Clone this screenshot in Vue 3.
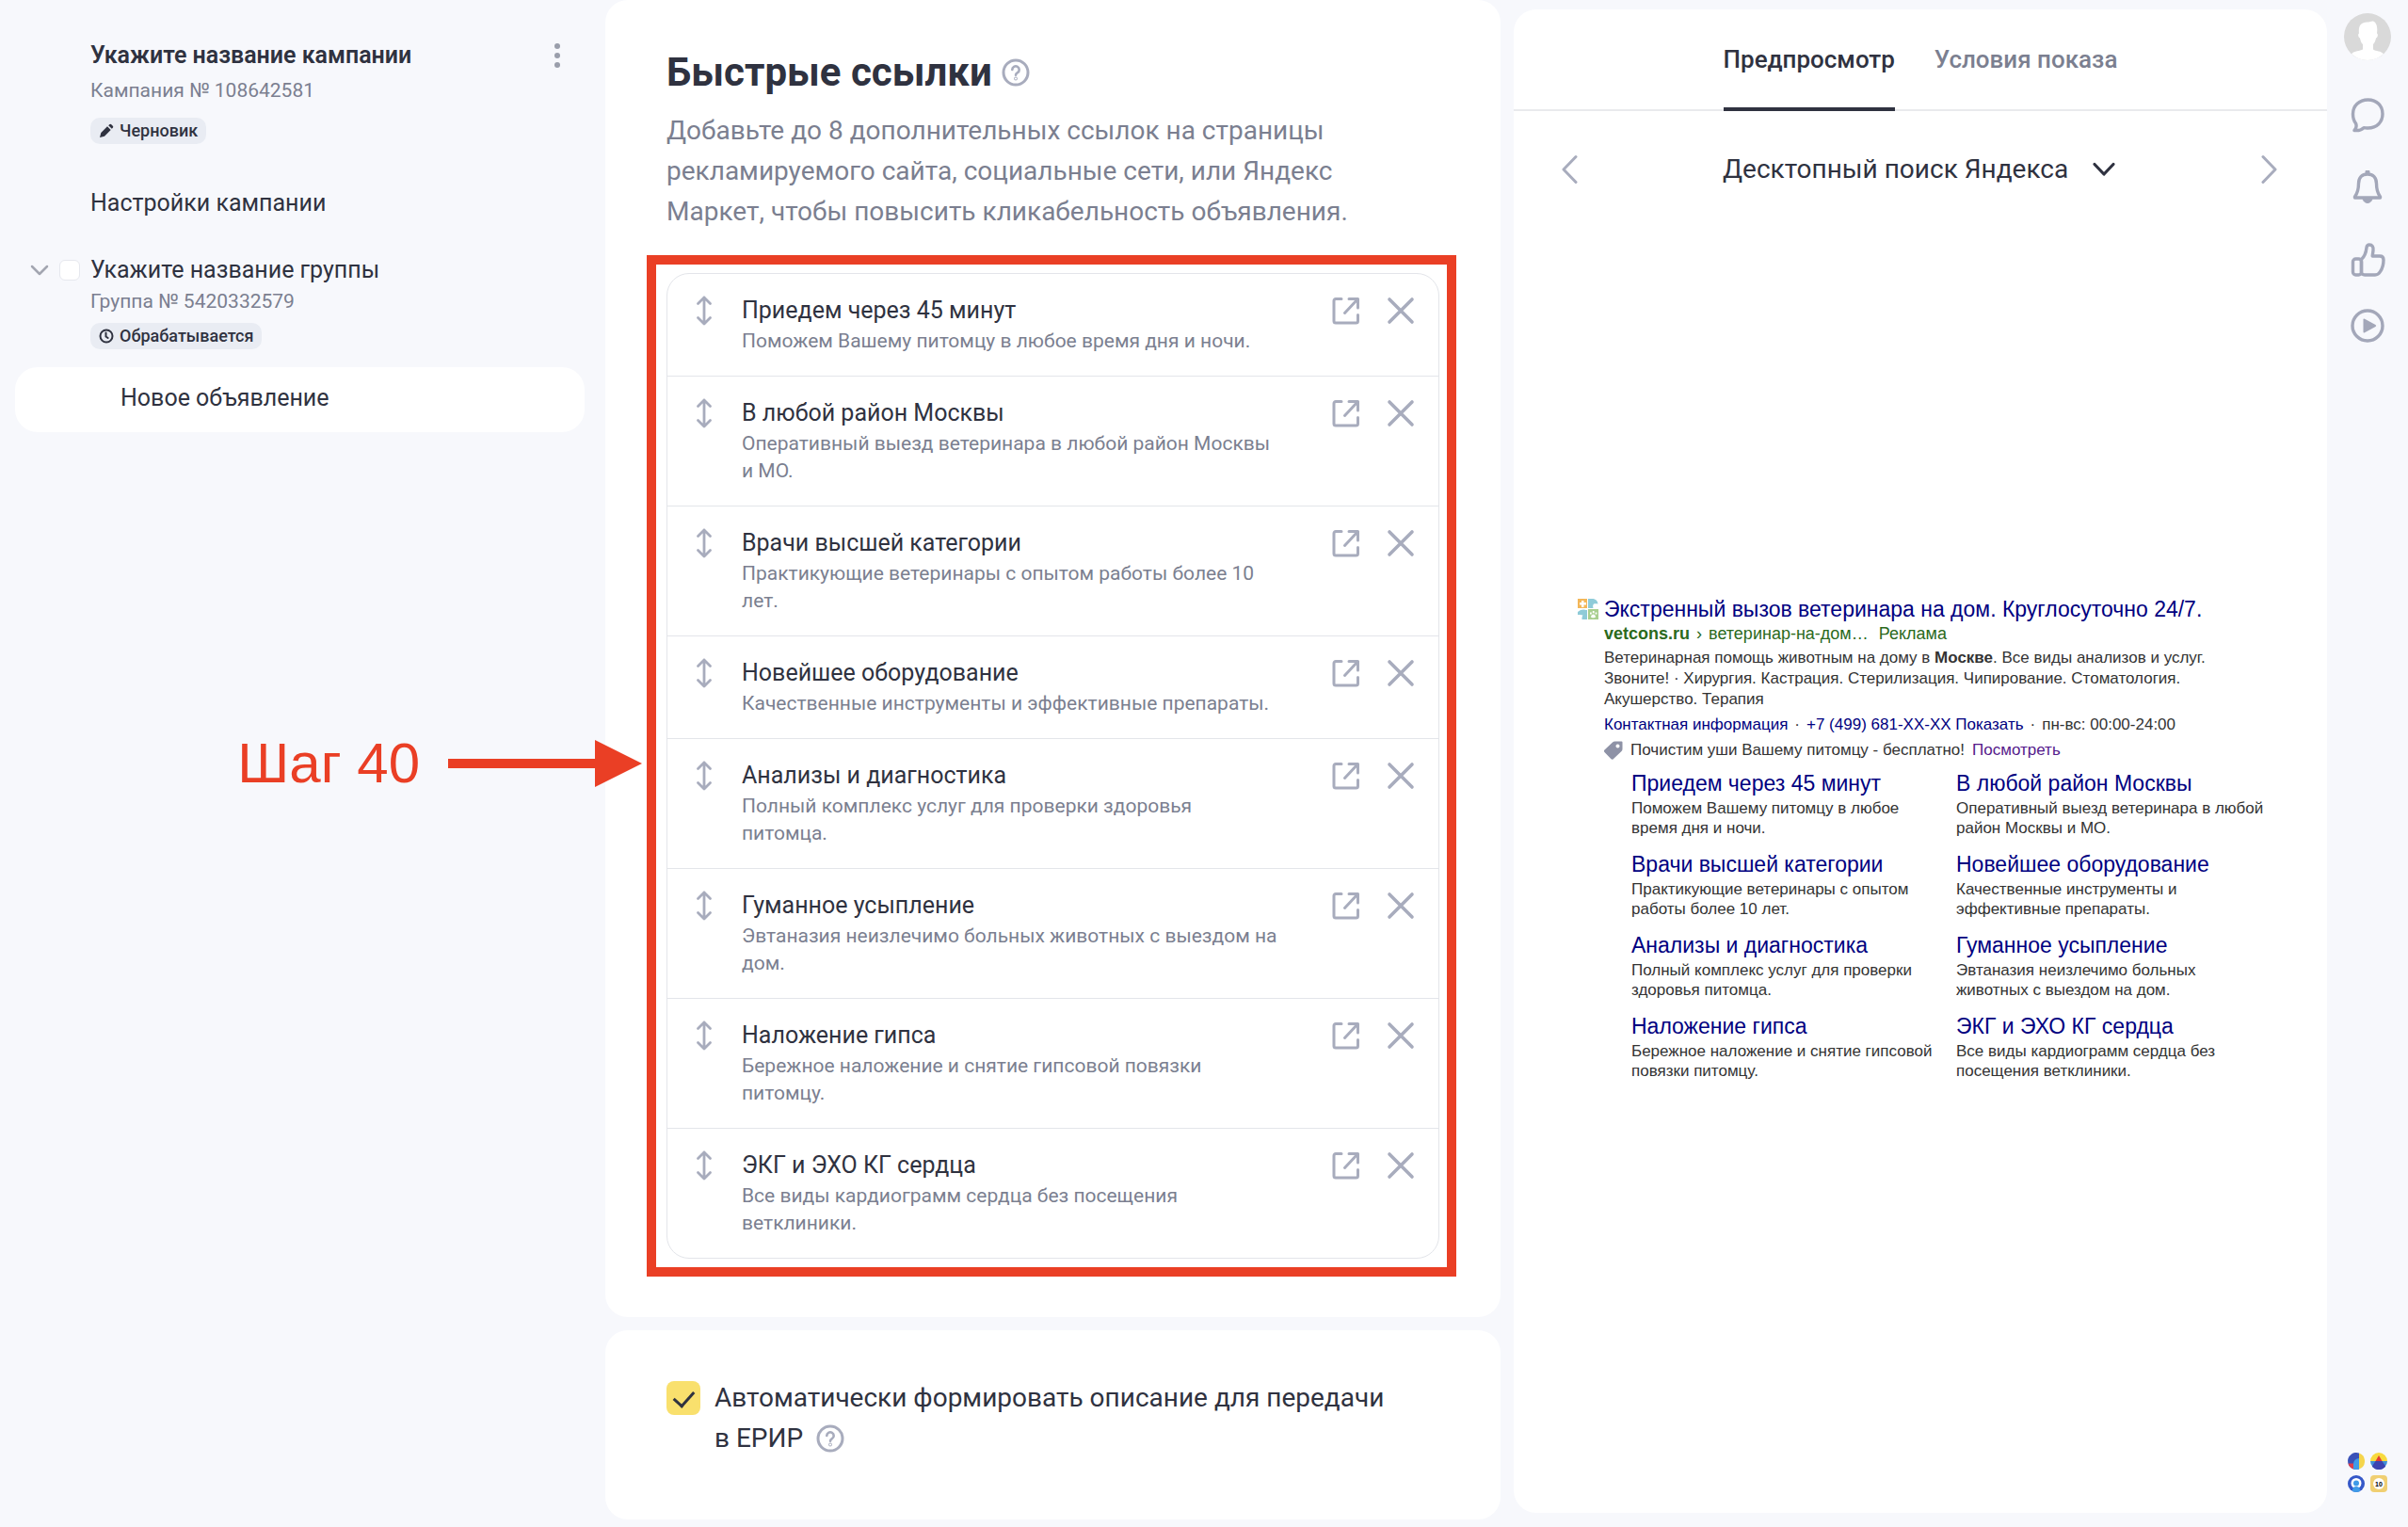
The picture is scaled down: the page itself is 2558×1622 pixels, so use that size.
<template>
  <div class="page">
    <aside class="sidebar">
      <header class="campaign">
        <div class="campaign-top">
          <h2 class="campaign-name">Укажите название кампании</h2>
          <button class="icon-button" aria-label="Меню кампании">
            <svg width="6" height="26" viewBox="0 0 6 26" fill="#9a9eab">
              <circle cx="3" cy="3" r="3" />
              <circle cx="3" cy="13" r="3" />
              <circle cx="3" cy="23" r="3" />
            </svg>
          </button>
        </div>
        <p class="muted">Кампания № 108642581</p>
        <span class="badge">
          <svg width="16" height="16" viewBox="0 0 16 16" fill="#2f3240">
            <path d="M1 15l1.300-5L9 3.300l3.700 3.700L6 13.700zM10.200 2.200l1-1a1.500 1.500 0 0 1 2.100 0l1.500 1.500a1.500 1.500 0 0 1 0 2.100l-1 1z" />
          </svg>
          Черновик
        </span>
      </header>

      <nav class="tree">
        <a href="#settings" class="tree-link">Настройки кампании</a>

        <div class="group">
          <button class="icon-button" aria-label="Свернуть группу">
            <svg width="20" height="12" viewBox="0 0 20 12" fill="none" stroke="#a3a6b1" stroke-width="2.500" stroke-linecap="round" stroke-linejoin="round">
              <path d="M2 2l8 8 8-8" />
            </svg>
          </button>
          <input v-model="groupSelected" type="checkbox" class="group-check" aria-label="Выбрать группу" />
          <a href="#group" class="tree-link">Укажите название группы</a>
        </div>
        <div class="group-info">
          <p class="muted">Группа № 5420332579</p>
          <span class="badge">
            <svg width="16" height="16" viewBox="0 0 16 16" fill="none" stroke="#2f3240" stroke-width="2" stroke-linecap="round">
              <circle cx="8" cy="8" r="6.500" />
              <path d="M7.500 4.500V8.500l2.200 1.500" />
            </svg>
            Обрабатывается
          </span>
        </div>

        <a href="#ad" class="tree-item">Новое объявление</a>
      </nav>
    </aside>

    <main class="content">
      <section class="card links-card">
        <div class="title-row">
          <h1>Быстрые ссылки</h1>
          <button class="icon-button" aria-label="Справка">
            <svg class="help" viewBox="0 0 30 30" fill="none" stroke="#a8acbd" stroke-width="3" stroke-linecap="round">
              <circle cx="15" cy="15" r="13" />
              <path d="M11.300 12a3.700 3.700 0 1 1 5.600 3.200c-1.300.8-1.900 1.300-1.900 2.600" stroke-width="2.600" />
              <circle cx="15" cy="21.500" r=".4" />
            </svg>
          </button>
        </div>
        <p class="lead">
          Добавьте до 8 дополнительных ссылок на страницы рекламируемого сайта, социальные сети, или Яндекс Маркет, чтобы повысить кликабельность объявления.
        </p>

        <div class="highlight">
          <ul class="link-list">
            <li v-for="link in links" :key="link.title" class="link-row">
              <button class="icon-button" aria-label="Переместить">
                <svg width="18" height="32" viewBox="0 0 18 32" fill="none" stroke="#a8acbd" stroke-width="2.800" stroke-linecap="round" stroke-linejoin="round">
                  <path d="M9 2v28M2.500 8.500L9 2l6.500 6.500M2.500 23.500L9 30l6.500-6.500" />
                </svg>
              </button>
              <div class="link-text">
                <h3>{{ link.title }}</h3>
                <p>{{ link.text }}</p>
              </div>
              <button class="icon-button" aria-label="Открыть ссылку">
                <svg width="30" height="32" viewBox="0 0 30 32" fill="none" stroke="#a8acbd" stroke-width="3" stroke-linecap="round" stroke-linejoin="round">
                  <path d="M10 3.500H4a2 2 0 0 0-2 2v21.500a2 2 0 0 0 2 2h21.500a2 2 0 0 0 2-2V20.500M18 3.500H27.500V13M27.500 3.500L13.500 18.500" />
                </svg>
              </button>
              <button class="icon-button" aria-label="Удалить" @click="removeLink(link)">
                <svg width="30" height="32" viewBox="0 0 30 32" fill="none" stroke="#a8acbd" stroke-width="3.600" stroke-linecap="round">
                  <path d="M3 4l24 24M27 4L3 28" />
                </svg>
              </button>
            </li>
          </ul>

          <div class="step">
            <span>Шаг 40</span>
            <svg width="206" height="50" viewBox="0 0 206 50" fill="#ea3f25">
              <path d="M0 20h156V0l50 25-50 25V30H0z" />
            </svg>
          </div>
        </div>
      </section>

      <section class="card erir-card">
        <input id="erir" v-model="autoErir" type="checkbox" class="erir-check" />
        <div class="erir-text">
          <label for="erir">Автоматически формировать описание для передачи в&nbsp;ЕРИР</label>
          <button class="icon-button" aria-label="Справка">
            <svg class="help" viewBox="0 0 30 30" fill="none" stroke="#a8acbd" stroke-width="3" stroke-linecap="round">
              <circle cx="15" cy="15" r="13" />
              <path d="M11.300 12a3.700 3.700 0 1 1 5.600 3.200c-1.300.8-1.900 1.300-1.900 2.600" stroke-width="2.600" />
              <circle cx="15" cy="21.500" r=".4" />
            </svg>
          </button>
        </div>
      </section>
    </main>

    <section class="preview">
      <div class="tabs">
        <button
          v-for="tab in tabs"
          :key="tab"
          class="tab"
          :class="{ active: tab === activeTab }"
          @click="activeTab = tab"
        >{{ tab }}</button>
      </div>

      <div class="switcher">
        <button class="icon-button" aria-label="Назад">
          <svg width="18" height="32" viewBox="0 0 18 32" fill="none" stroke="#a8acbd" stroke-width="3" stroke-linecap="round" stroke-linejoin="round">
            <path d="M16 2.500L3 16l13 13.500" />
          </svg>
        </button>
        <div class="select">
          <select v-model="place" aria-label="Место показа">
            <option>Десктопный поиск Яндекса</option>
          </select>
          <svg width="26" height="16" viewBox="0 0 26 16" fill="none" stroke="#2f3240" stroke-width="3.200" stroke-linecap="round" stroke-linejoin="round">
            <path d="M3 2.500l10 10.500 10-10.500" />
          </svg>
        </div>
        <button class="icon-button" aria-label="Вперёд">
          <svg width="18" height="32" viewBox="0 0 18 32" fill="none" stroke="#a8acbd" stroke-width="3" stroke-linecap="round" stroke-linejoin="round">
            <path d="M2 2.500L15 16 2 29.500" />
          </svg>
        </button>
      </div>

      <div class="stage">
        <article class="ad">
          <svg class="favicon" width="22" height="22" viewBox="0 0 22 22">
            <path d="M0 0h10v10H0z" fill="#f3b759" />
            <path d="M4 2h2.500v2H9v2.500H6.500V9H4V6.500H2V4h2z" fill="#fff" />
            <path d="M11 0h4c3.500 0 6 1.500 6.500 5.500-1.500-.5-3-.5-4.500 0-1 1-1 3-.5 4.500H11z" fill="#8fcbd8" />
            <path d="M0 14c3-3 7-3 9-2h1v10H4.500c0-2 0-3 1-4.500-2-1-4-.5-5.500-.5z" fill="#8fcbd8" />
            <path d="M11 11h11v11H11z" fill="#a9cf8f" />
            <path d="M14 19.500c0-2 1.500-3 2.500-3s2.500 1 2.500 3c-1 1-4 1-5 0zM13 14.500h1.800v2H13zM15.800 13h1.800v2.200h-1.800zM18.600 14.500h1.800v2h-1.800z" fill="#fff" />
          </svg>
          <div class="ad-body">
            <a href="#ad" class="ad-title">Экстренный вызов ветеринара на дом. Круглосуточно 24/7.</a>
            <div class="ad-path"><b>vetcons.ru</b> <i>›</i> ветеринар-на-дом… <span>Реклама</span></div>
            <p class="ad-text">
              Ветеринарная помощь животным на дому в <b>Москве</b>. Все виды анализов и услуг. Звоните! · Хирургия. Кастрация. Стерилизация. Чипирование. Стоматология. Акушерство. Терапия
            </p>
            <div class="ad-contacts">
              <a href="#contacts">Контактная информация</a>
              <i>·</i>
              <a href="#phone">+7 (499) 681-XX-XX Показать</a>
              <i>·</i>
              <span>пн-вс: 00:00-24:00</span>
            </div>
            <div class="ad-promo">
              <svg width="20" height="20" viewBox="0 0 20 20">
                <path d="M0 10L9 1.500Q10 .5 11.500.5H18.500q1 0 1 1V8.500q0 1.500-1 2.500L9.500 19.500Q8.500 20 7.500 19.300L.5 12Q-.5 11 0 10zM14.500 3.500a2 2 0 1 0 .01 0z" fill="#8e92a6" fill-rule="evenodd" />
              </svg>
              <span>Почистим уши Вашему питомцу - бесплатно!</span>
              <a href="#promo">Посмотреть</a>
            </div>
            <div class="sitelinks">
              <div v-for="link in links" :key="link.title" class="sitelink">
                <a href="#link">{{ link.title }}</a>
                <p>{{ link.text }}</p>
              </div>
            </div>
          </div>
        </article>
      </div>
    </section>

    <aside class="rail">
      <button class="icon-button" aria-label="Профиль">
        <svg width="50" height="50" viewBox="0 0 50 50">
          <circle cx="25" cy="25" r="25" fill="#d9d9d9" />
          <path d="M8 43.300C11 39.500 17 40.500 20 38.500V33c-2-1.500-2.500-4.500-3-6.500-2-.5-2.500-4.500-1-5-1-7 1.500-12 8.500-12 3 0 4.500-1.500 7-1-.5 1 1.500.5 2 2 2 3 2 7 1.500 11 1.500.5 1 4.500-1 5-.5 3-1.500 5-3 6.500v5.500c3 2 8.500 1.500 11 4.800A25 25 0 0 1 8 43.300z" fill="#fff" />
        </svg>
      </button>
      <button class="icon-button" aria-label="Чат">
        <svg width="38" height="38" viewBox="0 0 38 38" fill="none" stroke="#a3a7b9" stroke-width="3.400" stroke-linejoin="round">
          <path d="M19.500 3C29 3 35 9.500 35 18s-6 15-15.500 15c-2 0-3-.3-4.500-.3C12 35.500 8.500 36 5 35.500c2-2 2.500-5 1.500-7.500C4.500 25.500 3.500 22 3.500 18 3.500 9.500 10 3 19.500 3z" />
        </svg>
      </button>
      <button class="icon-button" aria-label="Уведомления">
        <svg width="38" height="38" viewBox="0 0 38 38" fill="none" stroke="#a3a7b9" stroke-width="3.400" stroke-linejoin="round">
          <path d="M19 5c-6 0-9.500 4-9.500 10 0 6-1 10-4 14v1h27v-1c-3-4-4-8-4-14 0-6-3.500-10-9.500-10z" />
          <path d="M17 1.500h4V5h-4zM14 30.500h10a5 5 0 0 1-10 0z" fill="#a3a7b9" stroke-width="1" />
        </svg>
      </button>
      <button class="icon-button" aria-label="Оценить">
        <svg width="38" height="38" viewBox="0 0 38 38" fill="none" stroke="#a3a7b9" stroke-width="3.400" stroke-linejoin="round">
          <path d="M12.500 18.500C16.500 15 17.500 10.500 18 6c.3-2.500 1.500-3 3-3 3 0 4.500 2.500 4 6l-.8 6H32c2.500 0 4 1.500 4 4 0 5-1 9-3.500 12.500-1.500 2.500-3 3.500-5.500 3.500H16c-2 0-3.500-1-3.500-3z" />
          <rect x="3.500" y="18" width="9" height="17" rx="3" />
        </svg>
      </button>
      <button class="icon-button video" aria-label="Видео">
        <svg width="38" height="38" viewBox="0 0 38 38">
          <circle cx="19" cy="19" r="16" fill="none" stroke="#a3a7b9" stroke-width="3.400" />
          <path d="M14.500 12.500q0-1.500 1.500-.8l11.500 6.300q1.500 1 0 2L16 26.300q-1.500.7-1.500-.8z" fill="#a3a7b9" />
        </svg>
      </button>

      <div class="services">
        <svg width="18" height="18" viewBox="0 0 18 18">
          <path d="M12 .5A9 9 0 1 0 12 17.500z" fill="#3a52b8" />
          <path d="M12 .5a9 9 0 0 1 0 17z" fill="#f5d54c" />
          <path d="M6 17.500V12a6 6 0 0 1 6-6v11.500q-3 1-6 0z" fill="#3f9be8" />
          <path d="M.5 11.500H6v6a9 9 0 0 1-5.500-6z" fill="#dd3f4d" />
        </svg>
        <svg width="18" height="18" viewBox="0 0 18 18">
          <path d="M0 9a9 9 0 0 1 18 0z" fill="#f8da3e" />
          <path d="M0 9a9 9 0 0 0 18 0z" fill="#3f8fd8" />
          <path d="M5.500 9L9 3l3.500 6z" fill="#e33b32" />
          <path d="M5.500 9h7l3.700 5.500a9 9 0 0 1-14.400 0z" fill="#3c43b0" />
        </svg>
        <svg width="18" height="18" viewBox="0 0 18 18">
          <circle cx="9" cy="9" r="9" fill="#3558c8" />
          <circle cx="9" cy="8.500" r="5.500" fill="#fff" />
          <circle cx="9" cy="8.500" r="3" fill="#3f9be8" />
          <path d="M5 17v-1a4 4 0 0 1 8 0v1q-4 2-8 0z" fill="#3f9be8" />
        </svg>
        <svg width="18" height="18" viewBox="0 0 18 18">
          <rect width="18" height="18" rx="4" fill="#f0cf72" />
          <circle cx="9" cy="9" r="6" fill="#fff" />
          <text x="9" y="11.500" text-anchor="middle" class="service-ten">10</text>
        </svg>
      </div>
    </aside>
  </div>
</template>

<script setup>
import { ref } from 'vue'

const groupSelected = ref(false)
const autoErir = ref(true)
const place = ref('Десктопный поиск Яндекса')

const tabs = ['Предпросмотр', 'Условия показа']
const activeTab = ref(tabs[0])

const links = ref([
  { title: 'Приедем через 45 минут', text: 'Поможем Вашему питомцу в любое время дня и ночи.' },
  { title: 'В любой район Москвы', text: 'Оперативный выезд ветеринара в любой район Москвы и МО.' },
  { title: 'Врачи высшей категории', text: 'Практикующие ветеринары с опытом работы более 10 лет.' },
  { title: 'Новейшее оборудование', text: 'Качественные инструменты и эффективные препараты.' },
  { title: 'Анализы и диагностика', text: 'Полный комплекс услуг для проверки здоровья питомца.' },
  { title: 'Гуманное усыпление', text: 'Эвтаназия неизлечимо больных животных с выездом на дом.' },
  { title: 'Наложение гипса', text: 'Бережное наложение и снятие гипсовой повязки питомцу.' },
  { title: 'ЭКГ и ЭХО КГ сердца', text: 'Все виды кардиограмм сердца без посещения ветклиники.' }
])

function removeLink(link) {
  links.value = links.value.filter(item => item !== link)
}
</script>

<style>
body {
  background: #f7f8fc;
}
</style>

<style scoped>
* {
  box-sizing: border-box;
}

h1, h2, h3, p, ul {
  margin: 0;
  padding: 0;
}

a {
  color: inherit;
  text-decoration: none;
}

.page {
  display: grid;
  grid-template-columns: 643fr 951fr 878fr 86px;
  min-height: 100vh;
  color: #2f3240;
  font-family: Roboto, sans-serif;
  font-size: 25px;
  line-height: 32px;
}

.icon-button {
  display: flex;
  padding: 0;
  border: none;
  background: none;
  cursor: pointer;
}

.muted {
  color: #7b7f90;
  font-size: 21px;
  line-height: 28px;
}

/* sidebar */
.sidebar {
  padding: 43px 22px 0 16px;
}

.campaign {
  display: flex;
  flex-direction: column;
  align-items: flex-start;
  gap: 7px;
  padding: 0 26px 0 80px;
}

.campaign-top {
  display: flex;
  align-items: center;
  justify-content: space-between;
  width: 100%;
}

.campaign-name {
  font-size: 25px;
  font-weight: 600;
}

.badge {
  display: inline-flex;
  align-items: center;
  gap: 6px;
  height: 28px;
  padding: 0 9px;
  border-radius: 10px;
  background: #e9ecf3;
  font-size: 18px;
  font-weight: 500;
}

.campaign .badge {
  margin-top: 8px;
}

.tree {
  display: flex;
  flex-direction: column;
  padding-top: 47px;
}

.tree > .tree-link {
  padding-left: 80px;
}

.group {
  display: flex;
  align-items: center;
  gap: 11px;
  padding: 39px 0 0 16px;
}

.group-check {
  width: 22px;
  height: 22px;
  margin: 0;
  appearance: none;
  border: 1px solid #e6e8ee;
  border-radius: 6px;
  background: #fff;
}

.group-check:checked {
  background: #f9e06d;
}

.group-info {
  display: flex;
  flex-direction: column;
  align-items: flex-start;
  gap: 9px;
  padding: 3px 0 19px 80px;
}

.tree-item {
  padding: 17px 112px 20px;
  border-radius: 24px;
  background: #fff;
}

/* content */
.content {
  display: flex;
  flex-direction: column;
  gap: 14px;
}

.card {
  border-radius: 24px;
  background: #fff;
}

.links-card {
  padding: 51px 65px 43px;
}

.title-row {
  display: flex;
  align-items: center;
  gap: 10px;
}

.title-row h1 {
  font-size: 42px;
  font-weight: 700;
  line-height: 52px;
}

.help {
  width: 30px;
  height: 30px;
}

.lead {
  max-width: 750px;
  margin-top: 14px;
  color: #7b7f90;
  font-size: 28px;
  line-height: 43px;
}

.highlight {
  position: relative;
  margin: 25px -18px 0 -21px;
  padding: 9px 8px 9px 11px;
  border: 10px solid #ea3f25;
}

.link-list {
  border: 1px solid #e3e5ea;
  border-radius: 24px;
  list-style: none;
}

.link-row {
  display: flex;
  align-items: flex-start;
  padding: 23px 25px 22px 30px;
}

.link-row + .link-row {
  border-top: 1px solid #e3e5ea;
}

.link-text {
  flex: 1;
  padding-left: 31px;
}

.link-text h3 {
  font-size: 25px;
  font-weight: 400;
}

.link-text p {
  max-width: 571px;
  margin-top: 2px;
  color: #7b7f90;
  font-size: 21px;
  line-height: 29px;
}

.link-text + .icon-button {
  margin-right: 28px;
}

.step {
  position: absolute;
  top: 50%;
  right: 100%;
  display: flex;
  align-items: center;
  gap: 30px;
  margin: -37px 15px 0 0;
  color: #ea3f25;
  font: 60px/68px "Liberation Sans", sans-serif;
  white-space: nowrap;
}

.erir-card {
  display: flex;
  gap: 15px;
  padding: 50px 65px 65px;
}

.erir-check {
  position: relative;
  flex: none;
  width: 36px;
  height: 36px;
  margin: 4px 0 0;
  appearance: none;
  border-radius: 8px;
  background: #eceef3;
}

.erir-check:checked {
  background: #f9e06d;
}

.erir-check:checked::after {
  content: '';
  position: absolute;
  top: 6px;
  left: 12px;
  width: 10px;
  height: 18px;
  border: solid #2f3240;
  border-width: 0 3px 3px 0;
  transform: rotate(42deg);
}

.erir-text {
  font-size: 28px;
  line-height: 43px;
}

.erir-text .icon-button {
  display: inline-flex;
  margin-left: 14px;
  vertical-align: -6px;
}

/* preview */
.preview {
  display: flex;
  flex-direction: column;
  margin: 10px 0 15px 14px;
  border-radius: 24px;
  background: #fff;
}

.tabs {
  display: flex;
  justify-content: center;
  gap: 42px;
  border-bottom: 2px solid #e9eaed;
}

.tab {
  margin-bottom: -2px;
  padding: 37px 0 35px;
  border: none;
  border-bottom: 4px solid transparent;
  background: none;
  color: #7b7f90;
  font: 500 26px/32px Roboto, sans-serif;
  cursor: pointer;
}

.tab.active {
  border-color: #2f3240;
  color: #2f3240;
}

.switcher {
  display: flex;
  align-items: center;
  justify-content: space-between;
  height: 124px;
  padding: 0 52px 0 50px;
}

.select {
  position: relative;
}

.select select {
  padding: 0 50px 0 0;
  appearance: none;
  border: none;
  background: none;
  color: #2f3240;
  font: 28px/40px Roboto, sans-serif;
}

.select svg {
  position: absolute;
  top: 12px;
  right: 0;
  pointer-events: none;
}

.stage {
  display: flex;
  flex: 1;
  align-items: center;
  justify-content: center;
  padding: 0 0 68px 6px;
}

.ad {
  display: flex;
  gap: 6px;
  width: 734px;
  color: #333;
  font: 17px/22px "Liberation Sans", sans-serif;
}

.favicon {
  flex: none;
  margin-top: 3px;
}

.ad-title {
  display: block;
  color: #000080;
  font-size: 23px;
  line-height: 28px;
}

.ad-path {
  color: #2b6a1c;
  font-size: 18px;
  line-height: 24px;
}

.ad-path i {
  margin: 0 2px;
  font-style: normal;
}

.ad-path span {
  margin-left: 6px;
}

.ad-text {
  max-width: 680px;
  margin-top: 3px;
}

.ad-contacts,
.ad-promo {
  display: flex;
  align-items: center;
  gap: 8px;
  margin-top: 5px;
}

.ad-contacts {
  gap: 7px;
}

.ad-contacts a {
  color: #000080;
}

.ad-contacts i {
  font-style: normal;
}

.ad-promo a {
  color: #551a8b;
}

.sitelinks {
  display: grid;
  grid-template-columns: 327px 1fr;
  gap: 14px 18px;
  margin-top: 10px;
  padding-left: 29px;
}

.sitelink a {
  display: block;
  color: #000080;
  font-size: 23px;
  line-height: 28px;
}

.sitelink p {
  margin-top: 2px;
  font-size: 17px;
  line-height: 21px;
}

/* rail */
.rail {
  display: flex;
  flex-direction: column;
  align-items: center;
  padding: 14px 0 37px;
}

.rail .icon-button {
  margin-bottom: 39px;
}

.rail .video {
  margin-top: -7px;
}

.services {
  display: grid;
  grid-template-columns: 18px 18px;
  gap: 6px;
  margin-top: auto;
}

.service-ten {
  font: bold 7px "Liberation Sans", sans-serif;
}
</style>
